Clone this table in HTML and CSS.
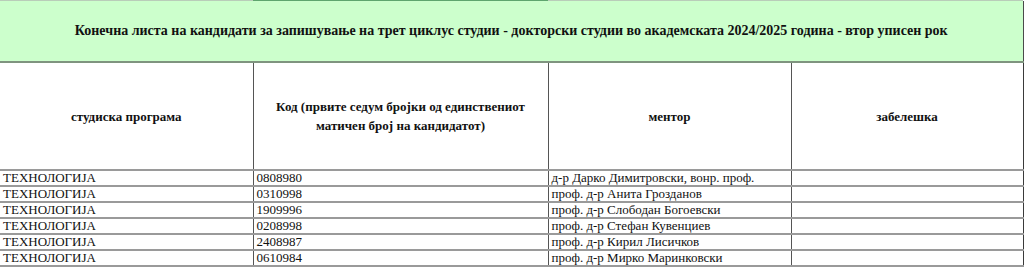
FILE: index.html
```html
<!DOCTYPE html>
<html lang="mk">
<head>
<meta charset="utf-8">
<title>Конечна листа</title>
<link rel="stylesheet" href="styles.css">
</head>
<body>
<div class="topstrip"><span class="seg seg-a"></span><span class="seg seg-b"></span><span class="seg seg-c"></span></div>
<table class="sheet">
  <colgroup>
    <col class="c1"><col class="c2"><col class="c3"><col class="c4">
  </colgroup>
  <tr class="title-row">
    <td colspan="4" class="title">Конечна листа на кандидати за запишување на трет циклус студии - докторски студии во академската 2024/2025 година - втор уписен рок</td>
  </tr>
  <tr class="head-row">
    <th>студиска програма</th>
    <th>Код (првите седум бројки од единствениот<br>матичен број на кандидатот)</th>
    <th>ментор</th>
    <th>забелешка</th>
  </tr>
  <tr class="data-row"><td>ТЕХНОЛОГИЈА</td><td>0808980</td><td>д-р Дарко Димитровски, вонр. проф.</td><td></td></tr>
  <tr class="data-row"><td>ТЕХНОЛОГИЈА</td><td>0310998</td><td>проф. д-р Анита Грозданов</td><td></td></tr>
  <tr class="data-row"><td>ТЕХНОЛОГИЈА</td><td>1909996</td><td>проф. д-р Слободан Богоевски</td><td></td></tr>
  <tr class="data-row"><td>ТЕХНОЛОГИЈА</td><td>0208998</td><td>проф. д-р Стефан Кувенциев</td><td></td></tr>
  <tr class="data-row"><td>ТЕХНОЛОГИЈА</td><td>2408987</td><td>проф. д-р Кирил Лисичков</td><td></td></tr>
  <tr class="data-row"><td>ТЕХНОЛОГИЈА</td><td>0610984</td><td>проф. д-р Мирко Маринковски</td><td></td></tr>
</table>
</body>
</html>
```
FILE: styles.css
```css
html, body {
  margin: 0;
  padding: 0;
  background: #ffffff;
}
body {
  font-family: "Liberation Serif", "DejaVu Serif", serif;
  color: #111111;
  width: 1024px;
}
.topstrip {
  display: flex;
  height: 1px;
  width: 1023px;
}
.seg { display: block; height: 1px; }
.seg-a { width: 253px; background: #b9cdb9; }
.seg-b { width: 295px; background: #5ea56e; }
.seg-c { flex: 1; background: #b9cdb9; }

.sheet {
  border-collapse: collapse;
  table-layout: fixed;
  width: 1023px;
  font-family: "Liberation Serif", "DejaVu Serif", serif;
}
.c1 { width: 253px; }
.c2 { width: 295px; }
.c3 { width: 243px; }
.c4 { width: 232px; }

.title {
  background: #ccffcc;
  height: 60px;
  padding: 0;
  text-align: center;
  vertical-align: middle;
  font-family: "Liberation Serif", "DejaVu Serif", serif;
  font-weight: bold;
  font-size: 14px;
  border-right: 1px solid #4a4a4a;
  border-bottom: 2px solid #7f947f;
}
.head-row th {
  height: 106px;
  padding: 0 4px;
  font-family: "Liberation Serif", "DejaVu Serif", serif;
  font-size: 13px;
  font-weight: bold;
  line-height: 19px;
  text-align: center;
  vertical-align: middle;
  border-left: 1px solid #555555;
  border-bottom: 2px solid #9a9a9a;
}
.head-row th:first-child { border-left: none; }
.head-row th:last-child { border-right: 1px solid #3a3a3a; }

.data-row td {
  height: 14px;
  padding: 0 0 0 3px;
  font-family: "Liberation Serif", "DejaVu Serif", serif;
  font-size: 13px;
  line-height: 14px;
  white-space: nowrap;
  overflow: hidden;
  vertical-align: bottom;
  border-left: 1px solid #555555;
  border-bottom: 2px solid #9a9a9a;
}
.data-row td:first-child { border-left: none; }
.data-row td:last-child { border-right: 1px solid #3a3a3a; }
```
